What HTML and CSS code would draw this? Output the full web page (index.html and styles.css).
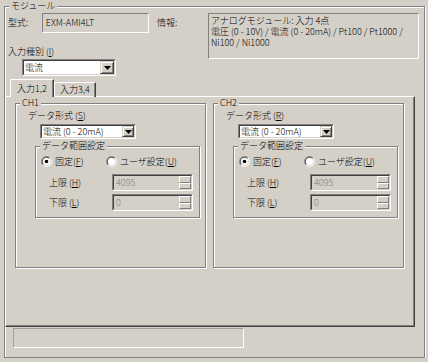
FILE: index.html
```html
<!DOCTYPE html>
<html lang="ja">
<head>
  <meta charset="UTF-8">
  <title>モジュール</title>
  <link rel="stylesheet" href="styles.css">
</head>
<body>
  <div class="group module">
    <div class="group-title">モジュール</div>

    <div class="module-top">
      <div class="left-col">
        <div class="field-row">
          <span class="lbl-model">型式:</span>
          <div class="textbox model-box">EXM-AMI4LT</div>
        </div>
        <div class="input-kind">入力種別 (<u>I</u>)</div>
        <div class="combo kind-combo">
          <div class="combo-inner">
            <span class="combo-text">電流</span>
            <span class="combo-btn"><svg width="7" height="4" viewBox="0 0 7 4"><path d="M0 0h7L3.5 4z" fill="#000"/></svg></span>
          </div>
        </div>
      </div>
      <span class="lbl-info">情報:</span>
      <div class="textbox info-box">アナログモジュール: 入力 4点<br>電圧 (0 - 10V) / 電流 (0 - 20mA) / Pt100 / Pt1000 /<br>Ni100 / Ni1000</div>
    </div>

    <div class="tabs">
      <div class="tab active">入力1,2</div>
      <div class="tab">入力3,4</div>
    </div>

    <div class="panel">
      <div class="channels">
        <!-- CH1 -->
        <div class="group channel">
          <div class="group-title">CH1</div>
          <div class="fmt-label">データ形式 (<u>S</u>)</div>
          <div class="combo fmt-combo">
            <div class="combo-inner">
              <span class="combo-text">電流 (0 - 20mA)</span>
              <span class="combo-btn"><svg width="7" height="4" viewBox="0 0 7 4"><path d="M0 0h7L3.5 4z" fill="#000"/></svg></span>
            </div>
          </div>
          <div class="group range">
            <div class="group-title">データ範囲設定</div>
            <div class="radio-row">
              <label class="radio radio-fixed">
                <svg class="radio-dot" width="11" height="11" viewBox="0 0 12 12">
                  <circle cx="6" cy="6" r="5" fill="#fff"/>
                  <path d="M2.1 9.9A5.5 5.5 0 0 1 9.9 2.1" fill="none" stroke="#808080"/>
                  <path d="M9.9 2.1A5.5 5.5 0 0 1 2.1 9.9" fill="none" stroke="#fff"/>
                  <path d="M2.8 9.2A4.5 4.5 0 0 1 9.2 2.8" fill="none" stroke="#404040"/>
                  <path d="M9.2 2.8A4.5 4.5 0 0 1 2.8 9.2" fill="none" stroke="#d4d0c8"/>
                  <circle cx="6" cy="6" r="2" fill="#000"/>
                </svg>
                <span>固定(<u>F</u>)</span>
              </label>
              <label class="radio">
                <svg class="radio-dot" width="11" height="11" viewBox="0 0 12 12">
                  <circle cx="6" cy="6" r="5" fill="#fff"/>
                  <path d="M2.1 9.9A5.5 5.5 0 0 1 9.9 2.1" fill="none" stroke="#808080"/>
                  <path d="M9.9 2.1A5.5 5.5 0 0 1 2.1 9.9" fill="none" stroke="#fff"/>
                  <path d="M2.8 9.2A4.5 4.5 0 0 1 9.2 2.8" fill="none" stroke="#404040"/>
                  <path d="M9.2 2.8A4.5 4.5 0 0 1 2.8 9.2" fill="none" stroke="#d4d0c8"/>
                </svg>
                <span>ユーザ設定(<u>U</u>)</span>
              </label>
            </div>
            <div class="spin-row first">
              <span class="spin-label">上限 (<u>H</u>)</span>
              <div class="spin">
                <div class="spin-inner">
                  <span class="spin-text">4095</span>
                  <span class="spin-btns"><span class="spin-btn"></span><span class="spin-btn"></span></span>
                </div>
              </div>
            </div>
            <div class="spin-row">
              <span class="spin-label">下限 (<u>L</u>)</span>
              <div class="spin">
                <div class="spin-inner">
                  <span class="spin-text">0</span>
                  <span class="spin-btns"><span class="spin-btn"></span><span class="spin-btn"></span></span>
                </div>
              </div>
            </div>
          </div>
        </div>

        <!-- CH2 -->
        <div class="group channel">
          <div class="group-title">CH2</div>
          <div class="fmt-label">データ形式 (<u>R</u>)</div>
          <div class="combo fmt-combo">
            <div class="combo-inner">
              <span class="combo-text">電流 (0 - 20mA)</span>
              <span class="combo-btn"><svg width="7" height="4" viewBox="0 0 7 4"><path d="M0 0h7L3.5 4z" fill="#000"/></svg></span>
            </div>
          </div>
          <div class="group range">
            <div class="group-title">データ範囲設定</div>
            <div class="radio-row">
              <label class="radio radio-fixed">
                <svg class="radio-dot" width="11" height="11" viewBox="0 0 12 12">
                  <circle cx="6" cy="6" r="5" fill="#fff"/>
                  <path d="M2.1 9.9A5.5 5.5 0 0 1 9.9 2.1" fill="none" stroke="#808080"/>
                  <path d="M9.9 2.1A5.5 5.5 0 0 1 2.1 9.9" fill="none" stroke="#fff"/>
                  <path d="M2.8 9.2A4.5 4.5 0 0 1 9.2 2.8" fill="none" stroke="#404040"/>
                  <path d="M9.2 2.8A4.5 4.5 0 0 1 2.8 9.2" fill="none" stroke="#d4d0c8"/>
                  <circle cx="6" cy="6" r="2" fill="#000"/>
                </svg>
                <span>固定(<u>F</u>)</span>
              </label>
              <label class="radio">
                <svg class="radio-dot" width="11" height="11" viewBox="0 0 12 12">
                  <circle cx="6" cy="6" r="5" fill="#fff"/>
                  <path d="M2.1 9.9A5.5 5.5 0 0 1 9.9 2.1" fill="none" stroke="#808080"/>
                  <path d="M9.9 2.1A5.5 5.5 0 0 1 2.1 9.9" fill="none" stroke="#fff"/>
                  <path d="M2.8 9.2A4.5 4.5 0 0 1 9.2 2.8" fill="none" stroke="#404040"/>
                  <path d="M9.2 2.8A4.5 4.5 0 0 1 2.8 9.2" fill="none" stroke="#d4d0c8"/>
                </svg>
                <span>ユーザ設定(<u>U</u>)</span>
              </label>
            </div>
            <div class="spin-row first">
              <span class="spin-label">上限 (<u>H</u>)</span>
              <div class="spin">
                <div class="spin-inner">
                  <span class="spin-text">4095</span>
                  <span class="spin-btns"><span class="spin-btn"></span><span class="spin-btn"></span></span>
                </div>
              </div>
            </div>
            <div class="spin-row">
              <span class="spin-label">下限 (<u>L</u>)</span>
              <div class="spin">
                <div class="spin-inner">
                  <span class="spin-text">0</span>
                  <span class="spin-btns"><span class="spin-btn"></span><span class="spin-btn"></span></span>
                </div>
              </div>
            </div>
          </div>
        </div>
      </div>
    </div>

    <div class="status-box"></div>
  </div>
</body>
</html>
```
FILE: styles.css
```css
body {
  margin: 0;
  background: #d4d0c8;
  font-family: "Noto Sans CJK JP", sans-serif;
  font-size: 9px;
  font-weight: 300;
  line-height: 12px;
  color: #000;
}

u { text-decoration: underline; }

/* etched group box */
.group {
  box-sizing: border-box;
  border: 1px solid #808080;
  box-shadow: inset 1px 1px 0 #fff, 1px 1px 0 #fff;
}
.group-title {
  width: fit-content;
  height: 12px;
  margin: -7px 0 0 4px;
  padding: 0 2px;
  background: #d4d0c8;
}

.module {
  width: 421px;
  height: 352px;
  margin: 6px 0 0 4px;
}

.module-top {
  display: flex;
  align-items: flex-start;
  margin-top: 1px;
}
.left-col {
  width: 141px;
  padding-left: 3px;
}
.field-row {
  display: flex;
  height: 20px;
}
.lbl-model {
  width: 34px;
  line-height: 20px;
}
.textbox {
  box-sizing: border-box;
  border: 1px solid;
  border-color: #808080 #fff #fff #808080;
}
.model-box {
  width: 108px;
  height: 20px;
  padding: 0 3px;
  line-height: 18px;
}
.lbl-info {
  width: 51px;
  margin-left: 8px;
  line-height: 20px;
}
.info-box {
  width: 211px;
  height: 46px;
  padding: 1px 2px;
  line-height: 11px;
  white-space: nowrap;
}
.input-kind {
  margin-top: 13px;
}

/* combo box */
.combo {
  box-sizing: border-box;
  border: 1px solid;
  border-color: #808080 #fff #fff #808080;
}
.combo-inner {
  display: flex;
  height: 100%;
  box-sizing: border-box;
  border: 1px solid;
  border-color: #404040 #d4d0c8 #d4d0c8 #404040;
  background: #fff;
}
.combo-text {
  flex: 1;
  padding-left: 1px;
  white-space: nowrap;
}
.combo-btn {
  display: flex;
  align-items: center;
  justify-content: center;
  box-sizing: border-box;
  width: 13px;
  background: #d4d0c8;
  border: 1px solid;
  border-color: #d4d0c8 #404040 #404040 #d4d0c8;
  box-shadow: inset 1px 1px 0 #fff, inset -1px -1px 0 #808080;
}
.kind-combo {
  width: 94px;
  height: 17px;
  margin: 1px 0 0 14px;
}
.kind-combo .combo-text { line-height: 13px; }
.kind-combo .combo-btn { width: 14px; }

/* tabs */
.tabs {
  display: flex;
  align-items: flex-end;
  height: 18px;
  margin: 3px 0 0 5px;
}
.tab {
  box-sizing: border-box;
  width: 42px;
  height: 15px;
  padding-top: 1px;
  text-align: center;
  border: 1px solid;
  border-color: #fff #404040 transparent #fff;
  border-bottom: none;
  box-shadow: inset -1px 0 0 #808080;
}
.tab.active {
  position: relative;
  z-index: 1;
  width: 44px;
  height: 18px;
  padding-top: 3px;
  background: #d4d0c8;
}

.panel {
  box-sizing: border-box;
  width: 410px;
  height: 231px;
  margin-top: -1px;
  padding: 6px 0 0 9px;
  border: 1px solid;
  border-color: #fff #404040 #404040 #fff;
  box-shadow: inset -1px -1px 0 #808080;
}
.channels {
  display: flex;
  gap: 7px;
}
.channel {
  width: 191px;
  height: 165px;
}
.fmt-label {
  margin: 1px 0 0 12px;
}
.fmt-combo {
  width: 96px;
  height: 15px;
  margin: 2px 0 0 24px;
}
.fmt-combo .combo-text { line-height: 11px; }
.fmt-combo .combo-btn { width: 12px; }

.range {
  width: 165px;
  height: 72px;
  margin: 7px 0 0 19px;
}
.radio-row {
  display: flex;
  align-items: center;
  height: 13px;
  margin: 3px 0 0 5px;
}
.radio {
  display: flex;
  align-items: center;
  gap: 3px;
}
.radio-fixed {
  width: 65px;
}

.spin-row {
  display: flex;
  align-items: center;
  height: 17px;
  margin-top: 3px;
}
.spin-row.first {
  margin-top: 6px;
}
.spin-label {
  width: 63px;
  margin-left: 13px;
}
.spin {
  box-sizing: border-box;
  width: 81px;
  height: 17px;
  border: 1px solid;
  border-color: #808080 #fff #fff #808080;
}
.spin-inner {
  display: flex;
  height: 100%;
  box-sizing: border-box;
  border: 1px solid;
  border-color: #404040 #d4d0c8 #d4d0c8 #404040;
}
.spin-text {
  flex: 1;
  padding-left: 2px;
  line-height: 13px;
  color: #808080;
}
.spin-btns {
  display: flex;
  flex-direction: column;
  width: 12px;
}
.spin-btn {
  flex: 1;
  box-sizing: border-box;
  border: 1px solid;
  border-color: #fff #808080 #808080 #fff;
  background: #d4d0c8;
}

.status-box {
  box-sizing: border-box;
  width: 231px;
  height: 20px;
  margin: 1px 0 0 8px;
  border: 1px solid;
  border-color: #a0a0a0 #fff #fff #a0a0a0;
}
```
